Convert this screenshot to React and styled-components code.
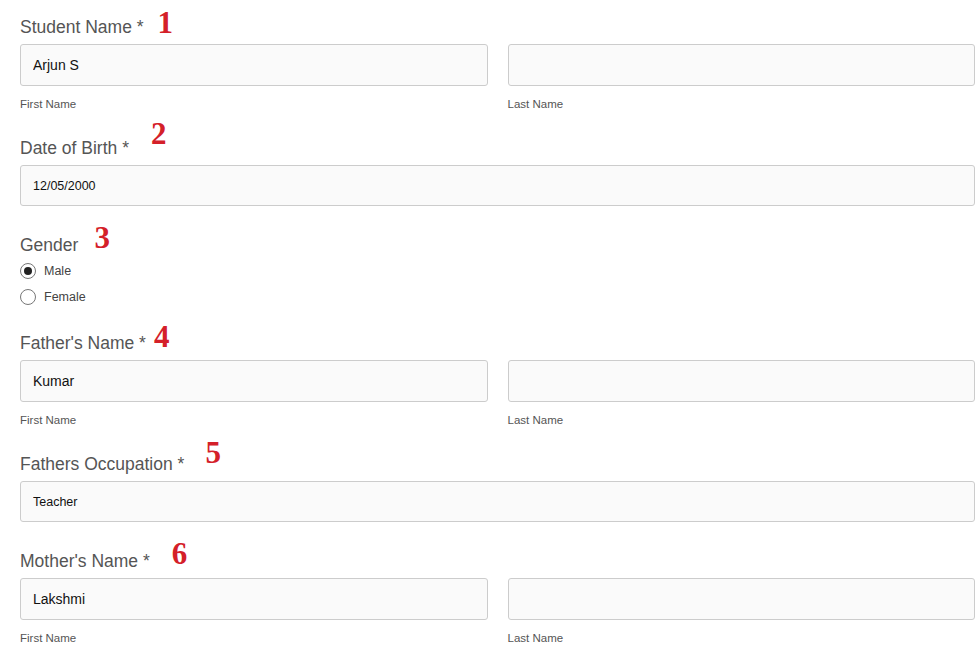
import React from "react";
import styled, { createGlobalStyle } from "styled-components";

const GlobalStyle = createGlobalStyle`
  body {
    margin: 0;
    background: #ffffff;
    font-family: "Liberation Sans", Arial, sans-serif;
  }
`;

const FormStyles = styled.form`
  padding: 15px 4px 0 20px;
  width: 979px;
  box-sizing: border-box;
`;

const Section = styled.div`
  display: flex;
  flex-direction: column;
  margin-bottom: ${(props) => props.$gap || 26}px;
`;

const Label = styled.div`
  height: 24px;
  line-height: 24px;
  font-size: 17.5px;
  color: #555555;
  white-space: nowrap;
`;

const Marker = styled.span`
  position: relative;
  top: -${(props) => props.$lift || 0}px;
  margin-left: ${(props) => props.$space || 16}px;
  font-family: "Liberation Serif", "Times New Roman", serif;
  font-weight: bold;
  font-size: 31px;
  line-height: 0;
  color: #d42029;
`;

const Row = styled.div`
  display: grid;
  grid-template-columns: ${(props) => (props.$split ? "1fr 1fr" : "1fr")};
  column-gap: 20px;
  margin-top: 5px;
`;

const Column = styled.div`
  display: flex;
  flex-direction: column;
`;

const Input = styled.input`
  box-sizing: border-box;
  width: 100%;
  height: ${(props) => props.$height || 42}px;
  margin: 0;
  padding: 0 12px;
  border: 1px solid #cccccc;
  border-radius: 3px;
  background: #fafafa;
  font-family: "Liberation Sans", Arial, sans-serif;
  font-size: ${(props) => props.$size || 14}px;
  color: #111111;
  outline: none;
`;

const Hint = styled.div`
  margin-top: 12px;
  height: 12px;
  line-height: 12px;
  font-size: 11.5px;
  color: #555555;
`;

const RadioRow = styled.label`
  display: flex;
  align-items: center;
  height: 26px;
  font-size: 12.5px;
  color: #444444;
  &:first-of-type {
    margin-top: 1px;
  }
  .dot {
    box-sizing: border-box;
    width: 16px;
    height: 16px;
    border-radius: 50%;
    border: 1px solid #777777;
    background: #ffffff;
    display: flex;
    align-items: center;
    justify-content: center;
    margin-right: 8px;
  }
  .dot span {
    width: 8px;
    height: 8px;
    border-radius: 50%;
    background: #222222;
  }
`;

const NameField = ({ label, mark, lift, space, first }) => (
  <Section>
    <Label>
      {label} *<Marker $lift={lift} $space={space}>{mark}</Marker>
    </Label>
    <Row $split>
      <Column>
        <Input defaultValue={first} />
        <Hint>First Name</Hint>
      </Column>
      <Column>
        <Input defaultValue="" />
        <Hint>Last Name</Hint>
      </Column>
    </Row>
  </Section>
);

const TextField = ({ label, mark, lift, space, value, size }) => (
  <Section $gap={27}>
    <Label>
      {label} *<Marker $lift={lift} $space={space}>{mark}</Marker>
    </Label>
    <Row>
      <Input $height={41} $size={size} defaultValue={value} />
    </Row>
  </Section>
);

const Radio = ({ checked, children }) => (
  <RadioRow>
    <div className="dot">{checked && <span />}</div>
    {children}
  </RadioRow>
);

const App = () => {
  return (
    <>
      <GlobalStyle />
      <FormStyles>
        <NameField label="Student Name" mark="1" lift={0} space={14} first="Arjun S" />
        <TextField label="Date of Birth" mark="2" lift={10} space={22} value="12/05/2000" size={12.5} />
        <Section $gap={21}>
          <Label>
            Gender<Marker $lift={3} $space={16}>3</Marker>
          </Label>
          <Radio checked>Male</Radio>
          <Radio>Female</Radio>
        </Section>
        <NameField label="Father's Name" mark="4" lift={2} space={8} first="Kumar" />
        <TextField label="Fathers Occupation" mark="5" lift={7} space={21} value="Teacher" size={12.5} />
        <NameField label="Mother's Name" mark="6" lift={3} space={22} first="Lakshmi" />
      </FormStyles>
    </>
  );
};

export default App;
